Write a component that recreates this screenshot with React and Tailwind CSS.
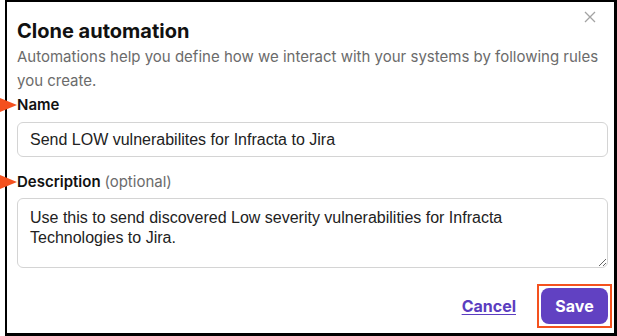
import React from 'react';

function Marker({ top }) {
  return (
    <svg className="absolute left-0 z-10" style={{ top }} width="17" height="16" viewBox="0 0 17 16">
      <polygon points="0,1 17,8 0,15" fill="#f4511e" />
    </svg>
  );
}

export default function App() {
  return (
    <div className="relative w-[617px] h-[336px] bg-white pl-[5px] font-['Inter',sans-serif]">
      <div className="relative h-full border-t-2 border-l-2 border-b-[3px] border-r-[3px] border-black pl-[10px] pr-[6px] pt-[15px]">
        <button className="absolute right-[17px] top-[8px] text-[#a3a3a3]">
          <svg width="14" height="14" viewBox="0 0 14 14" stroke="currentColor" strokeWidth="1.3" fill="none">
            <path d="M2 2l10 10M12 2L2 12" />
          </svg>
        </button>
        <h2 className="text-[20px] leading-[28px] font-bold text-[#111]">Clone automation</h2>
        <p className="text-[15px] leading-[24px] text-[#6b6b6b]">
          Automations help you define how we interact with your systems by following rules you create.
        </p>
        <label className="block text-[15px] leading-[24px] font-semibold text-[#111]">Name</label>
        <input
          className="mt-[5px] w-full h-[35px] rounded-[6px] border border-[#d4d4d4] px-[12px] text-[16px] text-[#222] font-['Liberation_Sans',sans-serif] outline-none"
          defaultValue="Send LOW vulnerabilites for Infracta to Jira"
        />
        <label className="block mt-[13px] text-[15px] leading-[24px] font-semibold text-[#111]">
          Description <span className="font-normal text-[#6b6b6b]">(optional)</span>
        </label>
        <textarea
          className="block mt-[4px] w-full h-[70px] rounded-[6px] border border-[#d4d4d4] px-[12px] py-[9px] text-[16px] leading-[20px] text-[#222] font-['Liberation_Sans',sans-serif] outline-none"
          defaultValue="Use this to send discovered Low severity vulnerabilities for Infracta Technologies to Jira."
        />
        <div className="mt-[16px] -mr-[4px] flex items-center justify-end gap-[21px]">
          <a href="#" className="text-[16px] font-bold text-[#5b3dc0] underline underline-offset-2">Cancel</a>
          <div className="p-[2px] border-2 border-[#f4511e]">
            <button className="h-[36px] w-[67px] rounded-[8px] bg-[#6141c2] text-white text-[16px] font-bold">Save</button>
          </div>
        </div>
      </div>
      <Marker top={97} />
      <Marker top={174} />
    </div>
  );
}
